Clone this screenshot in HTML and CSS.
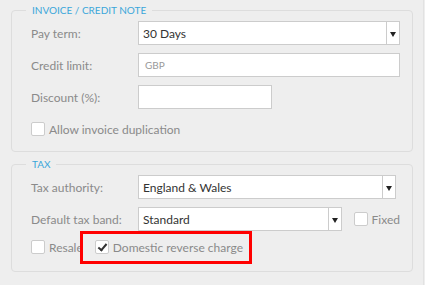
FILE: index.html
```html
<!DOCTYPE html>
<html lang="en">
<head>
<meta charset="utf-8"/>
<meta content="width=device-width, initial-scale=1.0" name="viewport"/>
<title>Customer settings</title>
<link rel="stylesheet" href="styles.css">
</head>
<body>
<div class="page">
<fieldset class="group">
<legend>Invoice / Credit note</legend>
<div class="row">
<label class="field-label">Pay term:</label>
<div class="select wide"><span class="select-value">30 Days</span><span class="select-arrow"></span></div>
</div>
<div class="row">
<label class="field-label">Credit limit:</label>
<div class="input wide"><span class="unit">GBP</span></div>
</div>
<div class="row">
<label class="field-label">Discount (%):</label>
<div class="input short"></div>
</div>
<div class="row check-row">
<label class="check"><span class="box"></span>Allow invoice duplication</label>
</div>
</fieldset>

<fieldset class="group tax">
<legend>Tax</legend>
<div class="row">
<label class="field-label">Tax authority:</label>
<div class="select authority"><span class="select-value">England &amp; Wales</span><span class="select-arrow"></span></div>
</div>
<div class="row">
<label class="field-label">Default tax band:</label>
<div class="select band"><span class="select-value">Standard</span><span class="select-arrow"></span></div>
<label class="check fixed"><span class="box"></span>Fixed</label>
</div>
<div class="row check-row">
<label class="check"><span class="box"></span>Resale</label>
<label class="check reverse"><span class="box checked"></span>Domestic reverse charge</label>
<div class="highlight"></div>
</div>
</fieldset>
</div>
</body>
</html>
```

FILE: styles.css
```css
body {
    margin: 0;
    padding: 0;
    background-color: #eeeeee;
    font-family: Lato, "Open Sans", sans-serif;
    font-size: 12px;
    color: #8a8a8a;
}
.page {
    width: 424px;
    height: 285px;
    border-right: 1px solid #e2e2e2;
    padding: 3px 0 0 11px;
    box-sizing: border-box;
}
.group {
    width: 402px;
    box-sizing: border-box;
    margin: 0;
    min-width: 0;
    border: 1px solid #dddddd;
    border-radius: 4px;
    padding: 4px 12px 10px 19px;
}
.group legend {
    margin-left: -5px;
    padding: 0 6px;
    font-size: 10px;
    line-height: 14px;
    text-transform: uppercase;
    color: #3aa6da;
}
.tax {
    margin-top: 5px;
    padding-bottom: 12px;
}
.row {
    position: relative;
    display: flex;
    align-items: center;
    height: 24px;
    margin-bottom: 8px;
}
.row:last-child {
    margin-bottom: 0;
}
.tax .check-row {
    margin-top: -4px;
}
.field-label {
    width: 107px;
    flex: none;
}
.select,
.input {
    height: 24px;
    box-sizing: border-box;
    background: #fff;
    border: 1px solid #cccccc;
    display: flex;
    align-items: center;
}
.wide {
    width: 262px;
}
.short {
    width: 134px;
}
.authority {
    width: 258px;
}
.band {
    width: 204px;
}
.select-value {
    flex: 1;
    padding-left: 4px;
    color: #333;
    font-size: 12px;
}
.select-arrow {
    width: 12px;
    height: 100%;
    border-left: 1px solid #cccccc;
    position: relative;
}
.select-arrow::after {
    content: "";
    position: absolute;
    left: 3px;
    top: 10px;
    border-left: 3.5px solid transparent;
    border-right: 3.5px solid transparent;
    border-top: 5px solid #222;
}
.unit {
    padding-left: 6px;
    font-size: 10px;
    color: #999;
}
.check {
    display: flex;
    align-items: center;
}
.box {
    width: 14px;
    height: 14px;
    box-sizing: border-box;
    background: #fff;
    border: 1px solid #cccccc;
    border-radius: 2px;
    margin-right: 4px;
    position: relative;
}
.box.checked::after {
    content: "";
    position: absolute;
    left: 4px;
    top: 1px;
    width: 3px;
    height: 7px;
    border-right: 2px solid #333;
    border-bottom: 2px solid #333;
    transform: rotate(40deg);
}
.fixed {
    margin-left: 12px;
}
.reverse {
    margin-left: 12px;
}
.highlight {
    position: absolute;
    left: 49px;
    top: -4px;
    width: 172px;
    height: 33px;
    box-sizing: border-box;
    border: 3px solid #ff0000;
}
```
